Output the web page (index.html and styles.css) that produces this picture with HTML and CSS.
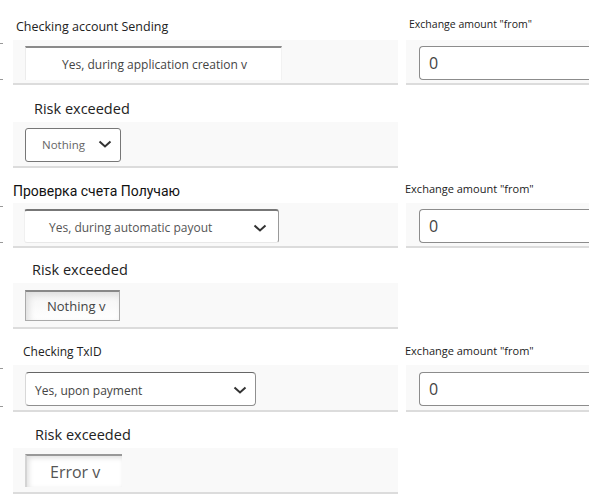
FILE: index.html
```html
<!DOCTYPE html>
<html>
<head>
<meta charset="utf-8">
<link rel="stylesheet" href="styles.css">
</head>
<body>
<div class="page">
  <section class="block">
    <div class="labels">
      <div class="lbl lbl-a">Checking account Sending</div>
      <div class="lbl lbl-r">Exchange amount "from"</div>
    </div>
    <div class="fields">
      <div class="marks"><i></i><i></i></div>
      <div class="panel">
        <div class="sel sel-1">Yes, during application creation v</div>
      </div>
      <div class="panel panel-r">
        <div class="inp">0</div>
      </div>
    </div>
    <div class="risk-lbl r1">Risk exceeded</div>
    <div class="risk-row">
      <div class="panel">
        <div class="sel sel-2"><span>Nothing</span><svg class="chev" viewBox="0 0 14 8" width="14" height="8"><path d="M1.5 1.5 L7 6.5 L12.5 1.5" fill="none" stroke="#333" stroke-width="2"/></svg></div>
      </div>
    </div>
  </section>

  <section class="block">
    <div class="labels">
      <div class="lbl lbl-b">Проверка счета Получаю</div>
      <div class="lbl lbl-r2">Exchange amount "from"</div>
    </div>
    <div class="fields">
      <div class="marks"><i></i><i></i></div>
      <div class="panel">
        <div class="sel sel-3"><span>Yes, during automatic payout</span><svg class="chev" viewBox="0 0 14 8" width="14" height="8"><path d="M1.5 1.5 L7 6.5 L12.5 1.5" fill="none" stroke="#333" stroke-width="2"/></svg></div>
      </div>
      <div class="panel panel-r">
        <div class="inp">0</div>
      </div>
    </div>
    <div class="risk-lbl r2">Risk exceeded</div>
    <div class="risk-row">
      <div class="panel">
        <div class="sel sel-4">Nothing v</div>
      </div>
    </div>
  </section>

  <section class="block block-3">
    <div class="labels">
      <div class="lbl lbl-c">Checking TxID</div>
      <div class="lbl lbl-r2">Exchange amount "from"</div>
    </div>
    <div class="fields">
      <div class="marks"><i></i><i></i></div>
      <div class="panel">
        <div class="sel sel-5"><span>Yes, upon payment</span><svg class="chev" viewBox="0 0 14 8" width="14" height="8"><path d="M1.5 1.5 L7 6.5 L12.5 1.5" fill="none" stroke="#333" stroke-width="2"/></svg></div>
      </div>
      <div class="panel panel-r">
        <div class="inp">0</div>
      </div>
    </div>
    <div class="risk-lbl r3">Risk exceeded</div>
    <div class="risk-row">
      <div class="panel">
        <div class="sel sel-6">Error v</div>
      </div>
    </div>
  </section>
</div>
</body>
</html>
```

FILE: styles.css
```css
html, body {
  margin: 0;
  padding: 0;
  background: #ffffff;
  overflow: hidden;
}
body {
  font-family: "Open Sans", "Noto Sans", sans-serif;
  color: #222;
  width: 589px;
  height: 504px;
}
.page {
  padding-top: 5px;
  display: flex;
  flex-direction: column;
}
.block {
  display: flex;
  flex-direction: column;
}
.block-3 { margin-top: 1px; }
.labels {
  height: 35px;
  display: grid;
  grid-template-columns: 405px 1fr;
  align-items: end;
}
.lbl {
  font-size: 12px;
  line-height: 16px;
  padding-bottom: 5px;
  white-space: nowrap;
}
.lbl-a { padding-left: 16px; font-size: 12.5px; }
.lbl-b {
  padding-left: 13px;
  font-family: Roboto, "Noto Sans", sans-serif;
  font-size: 14px;
  color: #111;
  padding-bottom: 4px;
}
.lbl-c { padding-left: 23px; font-size: 12px; }
.lbl-r { padding-left: 4px; font-size: 10.5px; padding-bottom: 8px; }
.lbl-r2 { padding-left: 0; font-size: 11px; padding-bottom: 6px; }

.fields {
  display: grid;
  grid-template-columns: 3px 385px 200px;
  column-gap: 10px;
}
.fields .panel-r { margin-left: -2px; }
.marks {
  display: flex;
  flex-direction: column;
  justify-content: space-between;
  padding: 3px 0 5px;
}
.marks i {
  display: block;
  height: 1px;
  background: #999;
}
.panel {
  background: #f9f9f9;
  border-bottom: 2px solid #dcdcdc;
  height: 45px;
  box-sizing: border-box;
  padding: 6px 0 0 12px;
}
.block-3 .fields .panel { height: 47px; padding-top: 7px; }
.panel-r { padding-left: 13px; }

.inp {
  height: 34px;
  box-sizing: border-box;
  border: 1px solid #8c8c8c;
  border-radius: 4px;
  border-right: none;
  background: #fff;
  font-size: 16px;
  color: #444;
  padding-left: 9px;
  display: flex;
  align-items: center;
}

.risk-lbl {
  height: 37px;
  box-sizing: border-box;
  display: flex;
  align-items: flex-end;
  font-size: 14.5px;
  line-height: 20px;
  padding-bottom: 3px;
  color: #222;
}
.r1 { padding-left: 34px; }
.r2 { padding-left: 32px; height: 35px; }
.r3 { padding-left: 35px; height: 36px; }
.risk-row {
  display: grid;
  grid-template-columns: 385px;
  padding-left: 13px;
}
.risk-row .panel { height: 46px; }

.sel {
  box-sizing: border-box;
  background: #fff;
  color: #555;
  display: flex;
  align-items: center;
  font-size: 12px;
  white-space: nowrap;
}
.chev { flex: none; }

.sel-1 {
  width: 257px;
  height: 34px;
  border-top: 2px solid #8a8a8a;
  border-left: 1px solid #ececec;
  border-right: 1px solid #f2f2f2;
  justify-content: center;
  font-size: 12px;
  color: #444;
  padding-left: 2px;
}
.sel-2 {
  width: 96px;
  height: 34px;
  border: 1px solid #777;
  border-radius: 3px;
  justify-content: space-between;
  padding: 0 8px 2px 16px;
  color: #666;
  font-size: 11.5px;
}
.sel-3 {
  width: 255px;
  height: 34px;
  margin-left: -1px;
  border: 1px solid #9a9a9a;
  border-top: 2px solid #777;
  border-left-color: #f0f0f0;
  border-bottom-color: #e8e8e8;
  border-radius: 3px;
  justify-content: space-between;
  padding: 2px 11px 0 24px;
  color: #555;
}
.sel-4 {
  width: 95px;
  height: 31px;
  margin-top: 1px;
  border: 1px solid #aaa;
  border-top: 2px solid #888;
  box-shadow: inset 3px 3px 6px #ddd;
  background: linear-gradient(#f4f4f4, #fff);
  padding-left: 21px;
  font-size: 13px;
  color: #444;
}
.sel-5 {
  width: 231px;
  height: 34px;
  border: 1px solid #8f8f8f;
  border-top-color: #666;
  border-left-color: #d8d8d8;
  border-radius: 4px;
  justify-content: space-between;
  padding: 2px 8px 0 9px;
  color: #444;
}
.sel-6 {
  width: 97px;
  height: 33px;
  margin-top: 0;
  border-top: 2px solid #999;
  border-left: 2px solid #d4d4d4;
  box-shadow: inset 2px 2px 5px #e0e0e0;
  padding-left: 23px;
  font-size: 16px;
  color: #555;
}
```
